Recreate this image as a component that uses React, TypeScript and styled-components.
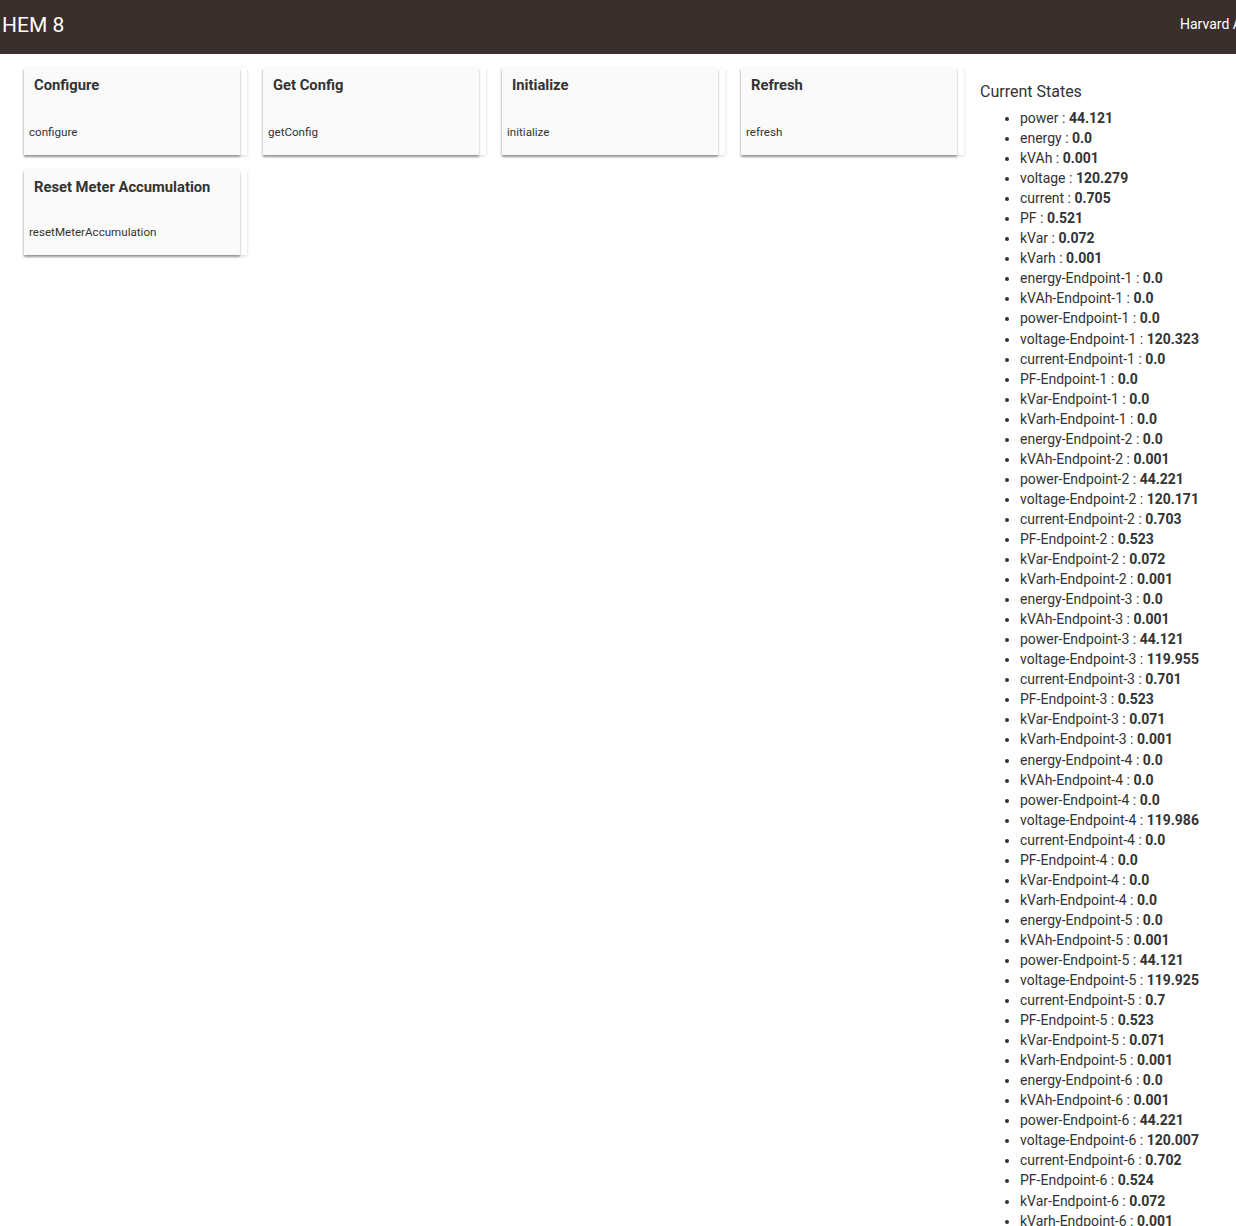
import React from "react";
import styled, { createGlobalStyle } from "styled-components";

const Global = createGlobalStyle`
  html, body { margin: 0; padding: 0; background: #fff; }
  body { font-family: Roboto, "Liberation Sans", sans-serif; color: #333; overflow-x: hidden; }
`;

const Header = styled.header`
  height: 54px;
  background: #3a2f2d;
  color: #fff;
  display: flex;
  align-items: center;
  overflow: hidden;
  white-space: nowrap;
`;

const Title = styled.div`
  flex: 1;
  min-width: 0;
  font-size: 21px;
  padding-left: 2px;
  margin-top: -4px;
`;

const User = styled.div`
  flex: 0 0 56px;
  min-width: 0;
  font-size: 14px;
  margin-top: -6px;
`;

const Body = styled.div`
  display: flex;
  align-items: flex-start;
`;

const Grid = styled.div`
  display: grid;
  grid-template-columns: repeat(4, 223px);
  column-gap: 16px;
  row-gap: 15px;
  padding: 14px 0 0 24px;
  width: 964px;
  flex: 0 0 964px;
  box-sizing: border-box;
`;

const Tile = styled.div`
  width: 223px;
  background: #fff;
  box-shadow: 0 1px 3px rgba(0, 0, 0, 0.16);
`;

const Panel = styled.div<{ $h: number }>`
  width: 216px;
  height: ${(p) => p.$h}px;
  background: #fafafa;
  box-shadow: 0 2px 2px rgba(0, 0, 0, 0.35);
  display: flex;
  flex-direction: column;
  justify-content: space-between;
  box-sizing: border-box;
  padding: 8px 0 16px 0;
`;

const TileTitle = styled.div`
  font-weight: 700;
  font-size: 14.75px;
  padding-left: 10px;
  color: #333;
`;

const TileSub = styled.div`
  font-size: 11.6px;
  padding-left: 5px;
  color: #333;
`;

const States = styled.div`
  padding: 28px 0 0 16px;
  flex: 1;
  white-space: nowrap;
`;

const StatesHead = styled.div`
  font-size: 16px;
  color: #333;
  line-height: 20px;
`;

const List = styled.ul`
  margin: 6px 0 0 0;
  padding-left: 40px;
  font-size: 14px;
  line-height: 20.05px;
`;

const Item = styled.li`
  color: #333;
  b { font-weight: 700; }
`;

const cards = [
  ["Configure", "configure"],
  ["Get Config", "getConfig"],
  ["Initialize", "initialize"],
  ["Refresh", "refresh"],
  ["Reset Meter Accumulation", "resetMeterAccumulation"],
];

const base: [string, string][] = [
  ["power", "44.121"],
  ["energy", "0.0"],
  ["kVAh", "0.001"],
  ["voltage", "120.279"],
  ["current", "0.705"],
  ["PF", "0.521"],
  ["kVar", "0.072"],
  ["kVarh", "0.001"],
];

const ep: string[][] = [
  ["0.0", "0.0", "0.0", "120.323", "0.0", "0.0", "0.0", "0.0"],
  ["0.0", "0.001", "44.221", "120.171", "0.703", "0.523", "0.072", "0.001"],
  ["0.0", "0.001", "44.121", "119.955", "0.701", "0.523", "0.071", "0.001"],
  ["0.0", "0.0", "0.0", "119.986", "0.0", "0.0", "0.0", "0.0"],
  ["0.0", "0.001", "44.121", "119.925", "0.7", "0.523", "0.071", "0.001"],
  ["0.0", "0.001", "44.221", "120.007", "0.702", "0.524", "0.072", "0.001"],
];
const epNames = ["energy", "kVAh", "power", "voltage", "current", "PF", "kVar", "kVarh"];

const states: [string, string][] = [
  ...base,
  ...ep.flatMap((vals, i) =>
    vals.map((v, j) => [`${epNames[j]}-Endpoint-${i + 1}`, v] as [string, string])
  ),
];

export default function App() {
  return (
    <>
      <Global />
      <Header>
        <Title>HEM 8</Title>
        <User>Harvard Ave</User>
      </Header>
      <Body>
        <Grid>
          {cards.map(([t, s], i) => (
            <Tile key={t}>
              <Panel $h={i === 4 ? 85 : 87}>
                <TileTitle>{t}</TileTitle>
                <TileSub>{s}</TileSub>
              </Panel>
            </Tile>
          ))}
        </Grid>
        <States>
          <StatesHead>Current States</StatesHead>
          <List>
            {states.map(([k, v]) => (
              <Item key={k}>
                {k} : <b>{v}</b>
              </Item>
            ))}
          </List>
        </States>
      </Body>
    </>
  );
}
